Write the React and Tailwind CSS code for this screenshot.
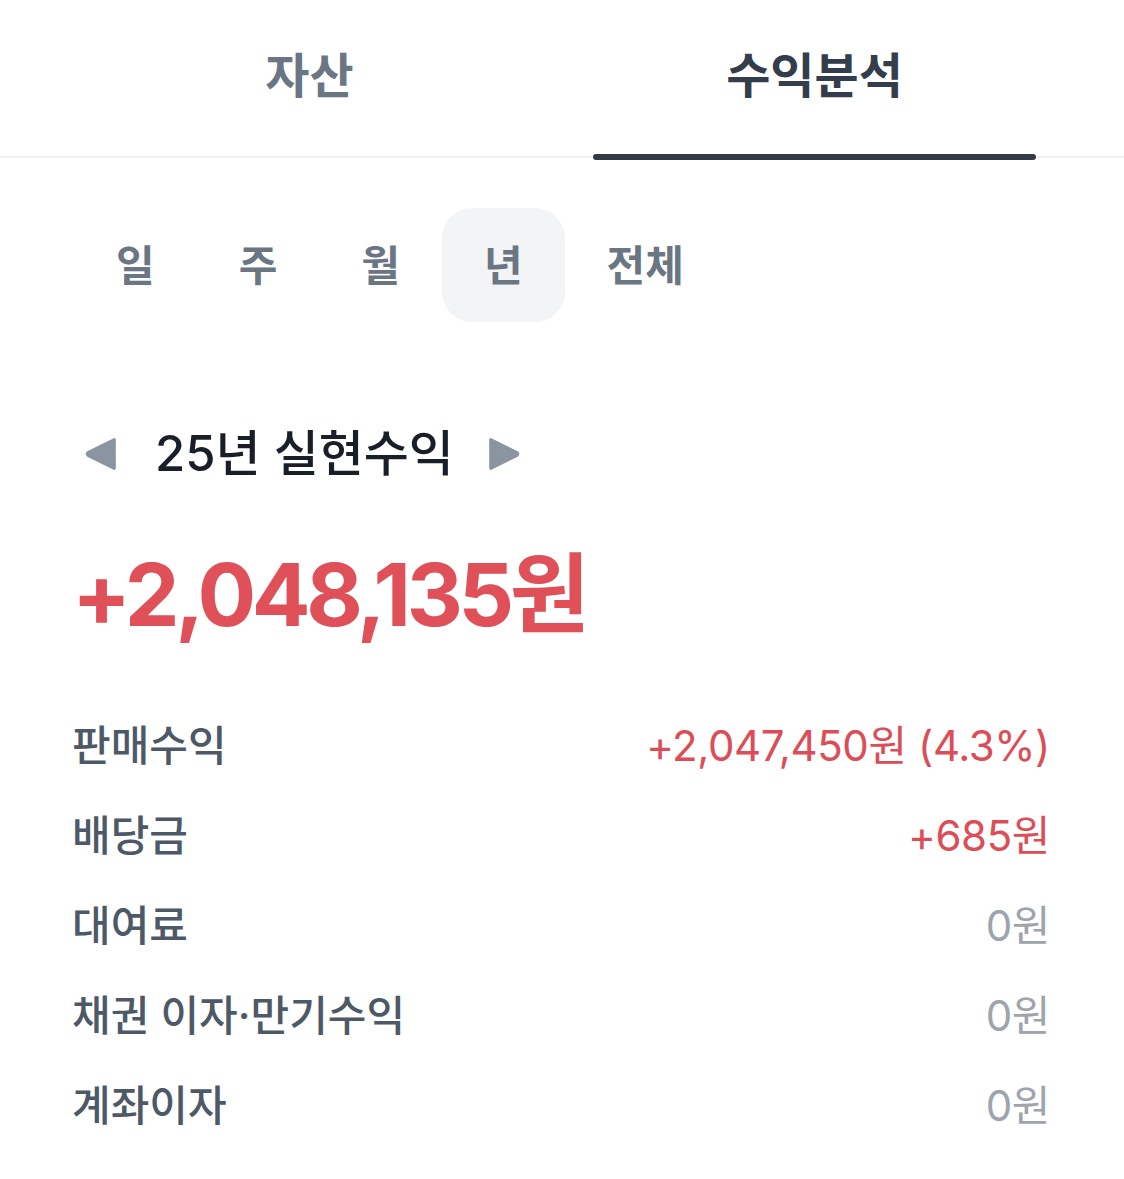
import React from "react";

const FONT = { fontFamily: '"Inter", "Noto Sans CJK KR", sans-serif' };

function Tri({ dir }) {
  return (
    <svg width="36" height="36" viewBox="0 0 34 34" className="shrink-0">
      {dir === "left" ? (
        <path d="M31 4 L31 30 Q31 33 28 31.5 L4 19.5 Q1 17 4 14.5 L28 2.5 Q31 1 31 4 Z" fill="#8b95a1" />
      ) : (
        <path d="M3 4 L3 30 Q3 33 6 31.5 L30 19.5 Q33 17 30 14.5 L6 2.5 Q3 1 3 4 Z" fill="#8b95a1" />
      )}
    </svg>
  );
}

const rows = [
  { label: "판매수익", value: "+2,047,450원 (4.3%)", red: true },
  { label: "배당금", value: "+685원", red: true },
  { label: "대여료", value: "0원", red: false },
  { label: "채권 이자·만기수익", value: "0원", red: false },
  { label: "계좌이자", value: "0원", red: false },
];

export default function App() {
  const periods = ["일", "주", "월", "년", "전체"];
  return (
    <div className="w-[1124px] min-h-[1179px] bg-white" style={FONT}>
      {/* Tabs */}
      <div className="border-b-2 border-[#f0f1f3]">
        <div className="flex px-[57px]">
          <div className="flex-1 h-[156px] flex justify-center pt-[46px]">
            <span className="text-[48px] leading-[60px] font-semibold text-[#6b7684]">자산</span>
          </div>
          <div className="flex-1 h-[156px] flex justify-center pt-[46px] relative">
            <span className="text-[48px] leading-[60px] font-bold text-[#333d4b]">수익분석</span>
            <div className="absolute left-[31px] right-[31px] bottom-[-4px] h-[6px] rounded-full bg-[#333a45]" />
          </div>
        </div>
      </div>

      {/* Period selector */}
      <div className="flex pl-[74px] mt-[50px]">
        {periods.map((p) => (
          <div
            key={p}
            className={
              "h-[114px] px-[42px] rounded-[30px] flex items-center justify-center text-[42px] font-semibold text-[#6b7684] " +
              (p === "년" ? "bg-[#f2f4f6]" : "")
            }
          >
            {p}
          </div>
        ))}
      </div>

      {/* Year nav */}
      <div className="flex items-center px-[83px] mt-[102px] h-[60px]">
        <Tri dir="left" />
        <span className="ml-[36px] text-[49px] font-medium text-[#191f28]">25년 실현수익</span>
        <span className="ml-[32px]"><Tri dir="right" /></span>
      </div>

      {/* Amount */}
      <div className="px-[72px] mt-[56px]">
        <div className="text-[87px] leading-[110px] font-bold text-[#e05058] tracking-[-0.05em]">+2,048,135원</div>
      </div>

      {/* Rows */}
      <div className="pl-[72px] pr-[74px] mt-[50px] flex flex-col">
        {rows.map((r) => (
          <div key={r.label} className="h-[90px] flex items-center justify-between">
            <span className="text-[42px] font-medium text-[#4e5968]">{r.label}</span>
            <span
              className={
                "text-[42px] font-normal tracking-[-0.01em] " + (r.red ? "text-[#dc4d57]" : "text-[#9ea4ab]")
              }
            >
              {r.value}
            </span>
          </div>
        ))}
      </div>
    </div>
  );
}
